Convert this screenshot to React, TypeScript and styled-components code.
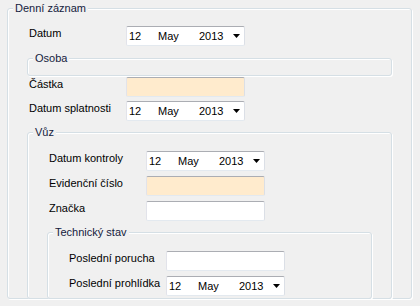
import React from "react";
import styled, { createGlobalStyle } from "styled-components";

const GlobalStyle = createGlobalStyle`
  html, body {
    margin: 0;
    padding: 0;
    background: #f0f0f0;
  }
  body {
    font-family: "Liberation Sans", Arial, sans-serif;
    font-size: 11px;
    line-height: 13px;
    color: #000;
  }
`;

const DateValue = ({ day, month, year }: { day: string; month: string; year: string }) => (
  <Picker>
    <Day>{day}</Day>
    <Month>{month}</Month>
    <Year>{year}</Year>
    <Arrow width="7" height="4" viewBox="0 0 7 4">
      <polygon points="0,0 7,0 3.5,4" fill="#000" />
    </Arrow>
  </Picker>
);

const App = () => {
  return (
    <Page>
      <GlobalStyle />
      <GroupBox $width={405} $top={17}>
        <Legend>Denní záznam</Legend>
        <Row>
          <Label>Datum</Label>
          <DateValue day="12" month="May" year="2013" />
        </Row>
        <EmptyGroup $mt={12}>
          <Legend>Osoba</Legend>
        </EmptyGroup>
        <Row $mt={1}>
          <Label>Částka</Label>
          <TextBox $bg="#ffebcd" />
        </Row>
        <Row $mt={4}>
          <Label>Datum splatnosti</Label>
          <DateValue day="12" month="May" year="2013" />
        </Row>
        <GroupBox $top={18} $mt={11} $nested>
          <Legend>Vůz</Legend>
          <Row>
            <Label>Datum kontroly</Label>
            <DateValue day="12" month="May" year="2013" />
          </Row>
          <Row $mt={5}>
            <Label>Evidenční číslo</Label>
            <TextBox $bg="#ffebcd" />
          </Row>
          <Row $mt={5}>
            <Label>Značka</Label>
            <TextBox />
          </Row>
          <GroupBox $top={18} $mt={11} $bottom={2} $nested>
            <Legend>Technický stav</Legend>
            <Row>
              <Label>Poslední porucha</Label>
              <TextBox />
            </Row>
            <Row $mt={5}>
              <Label>Poslední prohlídka</Label>
              <DateValue day="12" month="May" year="2013" />
            </Row>
          </GroupBox>
        </GroupBox>
      </GroupBox>
    </Page>
  );
};

export default App;

const Page = styled.div`
  width: 420px;
  height: 306px;
  box-sizing: border-box;
  padding: 8px 0 0 7px;
  overflow: hidden;
`;

const GroupBox = styled.div<{ $width?: number; $top: number; $bottom?: number; $mt?: number; $nested?: boolean }>`
  position: relative;
  box-sizing: border-box;
  width: ${(p) => (p.$width ? `${p.$width}px` : "auto")};
  margin-top: ${(p) => p.$mt ?? 0}px;
  margin-bottom: ${(p) => (p.$nested ? -1 : 0)}px;
  padding: ${(p) => p.$top}px 19px ${(p) => p.$bottom ?? 0}px 19px;
  border: 1px solid #d5dfe5;
  border-radius: 3px;
  box-shadow: inset 1px 1px 0 #fff, 1px 1px 0 #fff;
`;

const EmptyGroup = styled.div<{ $mt?: number }>`
  position: relative;
  box-sizing: border-box;
  height: 18px;
  margin-top: ${(p) => p.$mt ?? 0}px;
  border: 1px solid #d5dfe5;
  border-radius: 3px;
  box-shadow: inset 1px 1px 0 #fff, 1px 1px 0 #fff;
`;

const Legend = styled.div`
  position: absolute;
  top: -7px;
  left: 5px;
  padding: 0 2px;
  background: #f0f0f0;
  color: #14213d;
  white-space: nowrap;
`;

const Row = styled.div<{ $mt?: number }>`
  display: grid;
  grid-template-columns: 99px 119px;
  height: 20px;
  margin-top: ${(p) => p.$mt ?? 0}px;
`;

const Label = styled.div`
  padding: 1px 0 0 2px;
  white-space: nowrap;
`;

const TextBox = styled.div<{ $bg?: string }>`
  box-sizing: border-box;
  height: 20px;
  background: ${(p) => p.$bg ?? "#fff"};
  border: 1px solid;
  border-color: #abadb3 #dbdfe6 #e3e9ef #e2e3ea;
  border-radius: 2px;
`;

const Picker = styled.div`
  box-sizing: border-box;
  height: 20px;
  display: flex;
  align-items: center;
  padding-left: 2px;
  background: #fff;
  border: 1px solid;
  border-color: #abadb3 #dbdfe6 #e3e9ef #e2e3ea;
  border-radius: 2px;
`;

const Day = styled.span`
  width: 29px;
`;

const Month = styled.span`
  width: 41px;
`;

const Year = styled.span`
  width: 26px;
`;

const Arrow = styled.svg`
  margin-left: auto;
  margin-right: 4px;
  display: block;
`;
